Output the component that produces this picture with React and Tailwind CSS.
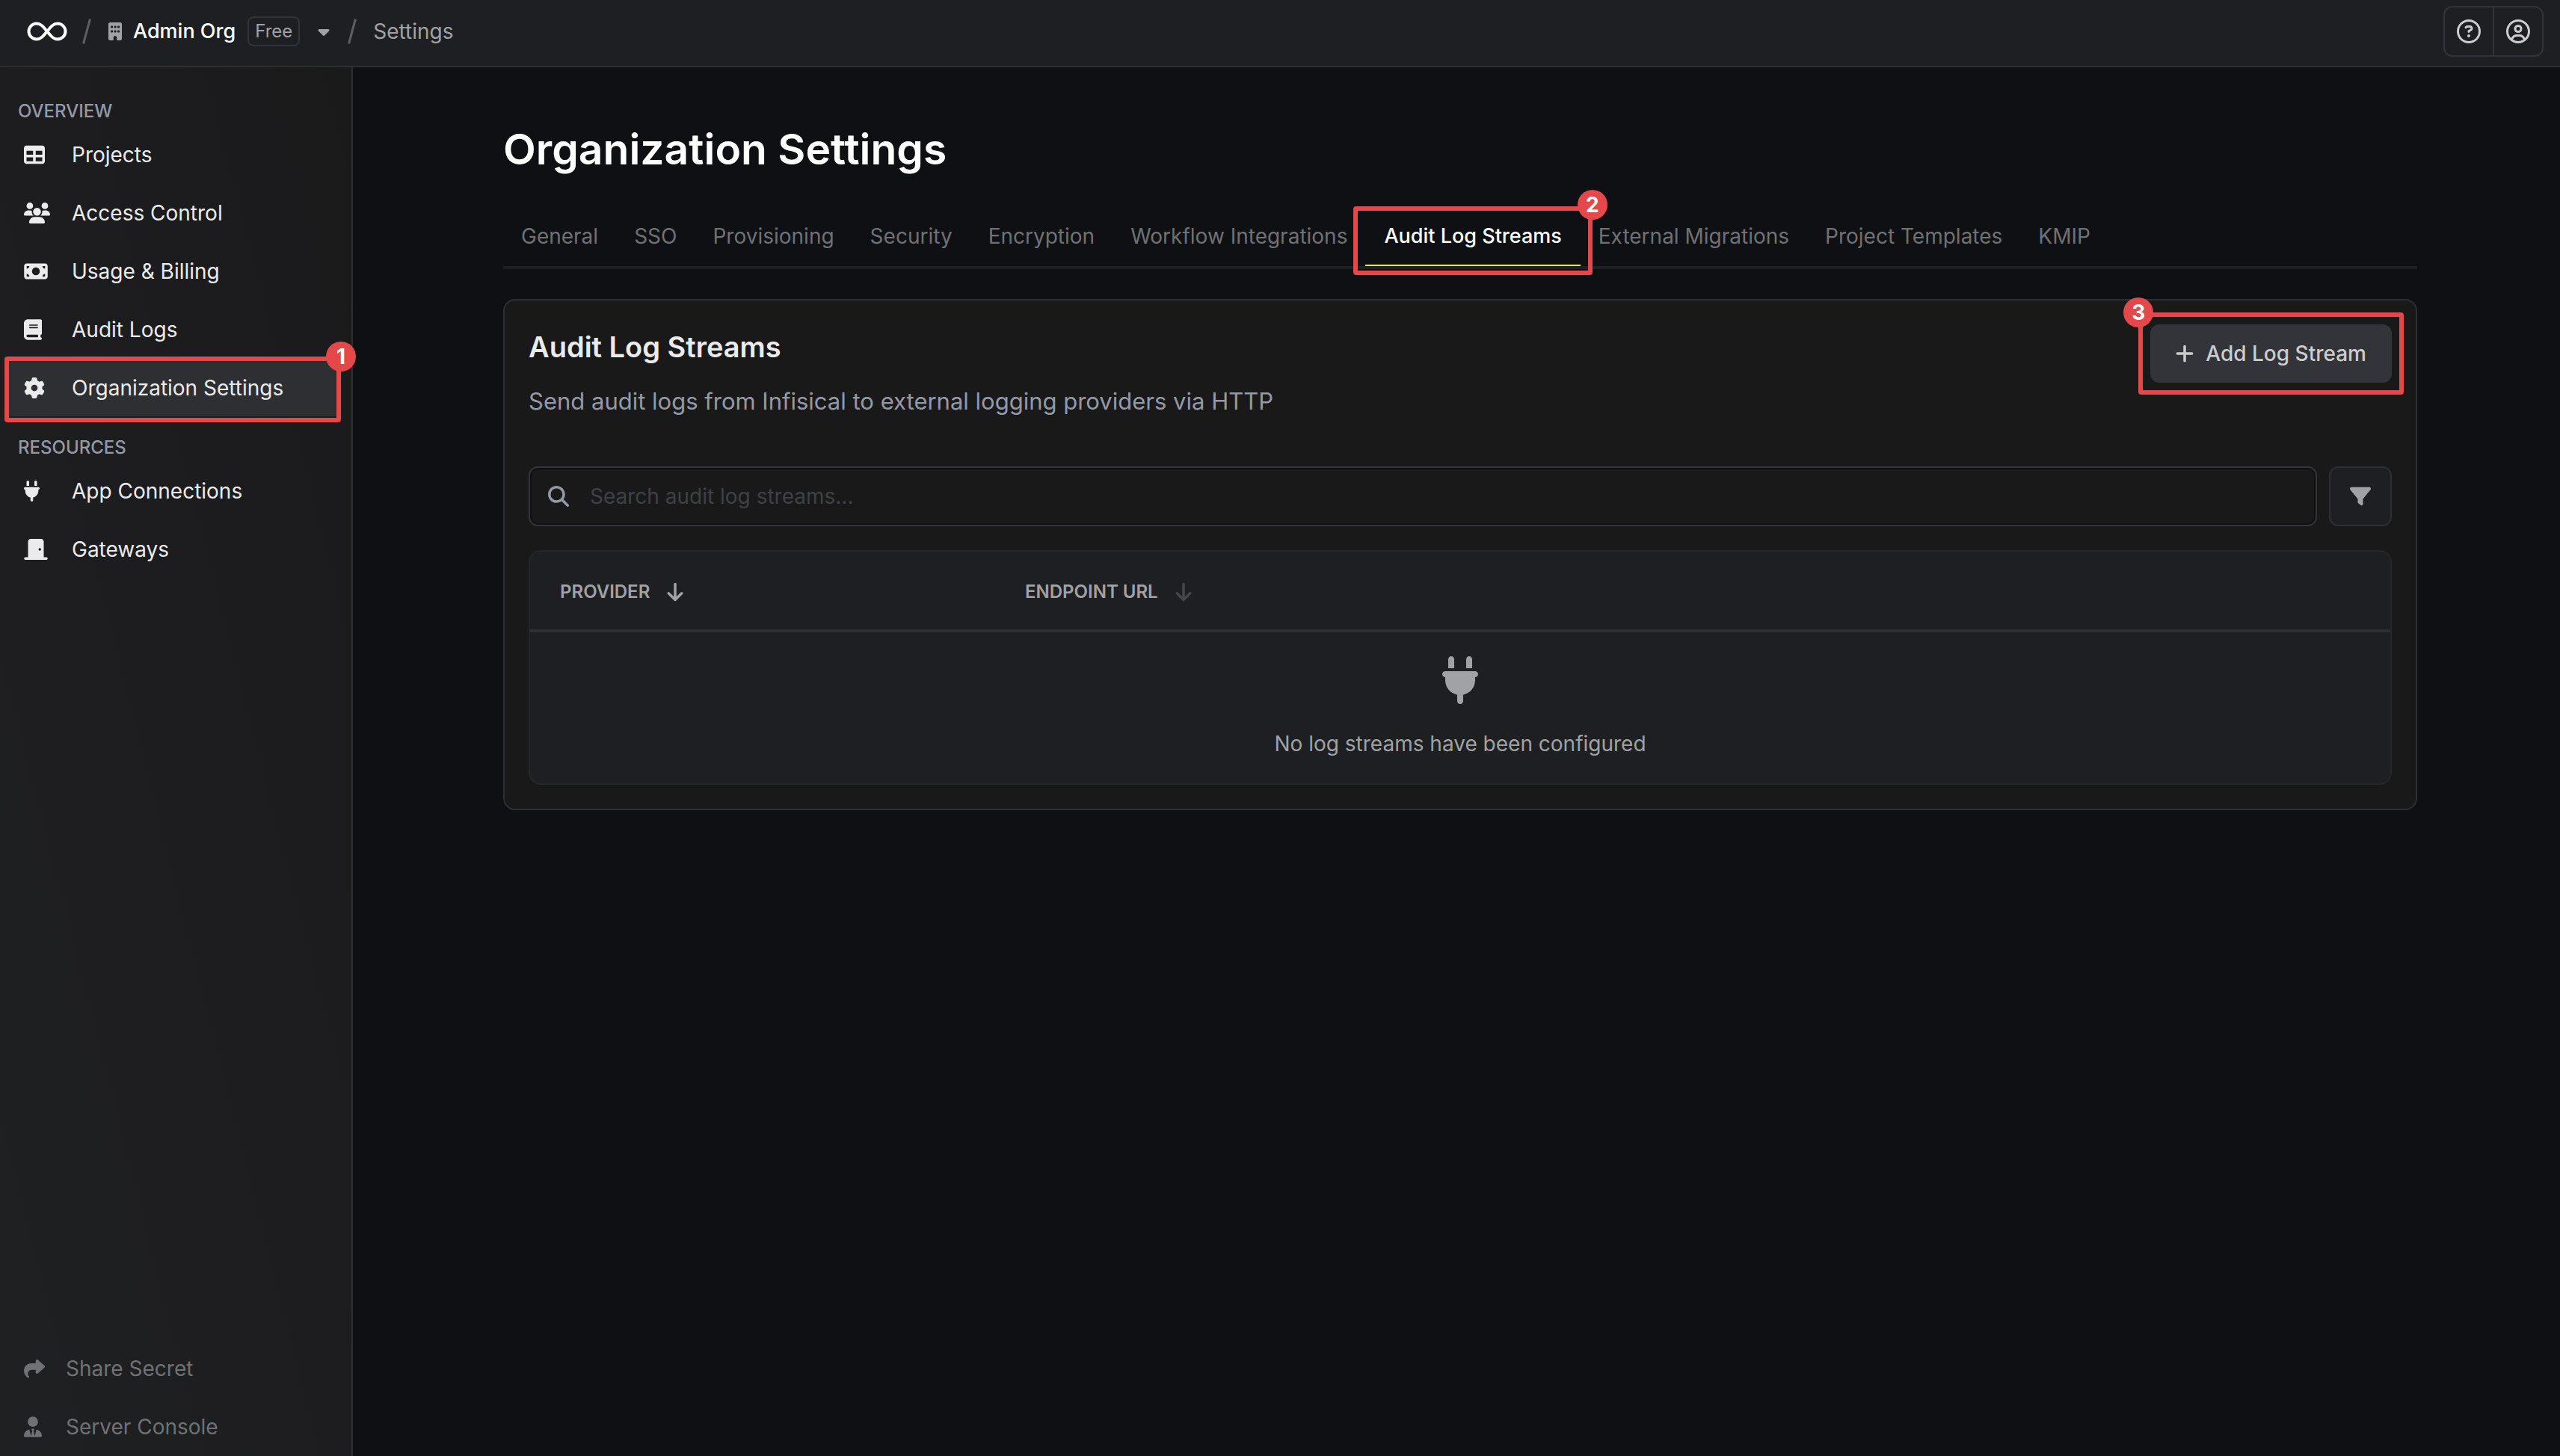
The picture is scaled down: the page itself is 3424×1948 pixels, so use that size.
import {
  FaArrowDown,
  FaBook,
  FaBuilding,
  FaCaretDown,
  FaDoorClosed,
  FaFilter,
  FaGear,
  FaMagnifyingGlass,
  FaMoneyBill,
  FaPlug,
  FaPlus,
  FaRegCircleQuestion,
  FaRegCircleUser,
  FaShare,
  FaTable,
  FaUserTie,
  FaUsers,
} from "react-icons/fa6";

const overview = [
  { label: "Projects", icon: FaTable, iconWidth: "w-7" },
  { label: "Access Control", icon: FaUsers, iconWidth: "w-[35px]" },
  { label: "Usage & Billing", icon: FaMoneyBill, iconWidth: "w-8" },
  { label: "Audit Logs", icon: FaBook, iconWidth: "w-6" },
  { label: "Organization Settings", icon: FaGear, iconWidth: "w-7", active: true },
];

const resources = [
  { label: "App Connections", icon: FaPlug, iconWidth: "w-[21px]" },
  { label: "Gateways", icon: FaDoorClosed, iconWidth: "w-8" },
];

const footer = [
  { label: "Share Secret", icon: FaShare, iconWidth: "w-7" },
  { label: "Server Console", icon: FaUserTie, iconWidth: "w-6" },
];

const tabs = [
  "General",
  "SSO",
  "Provisioning",
  "Security",
  "Encryption",
  "Workflow Integrations",
  "Audit Log Streams",
  "External Migrations",
  "Project Templates",
  "KMIP",
];

function Highlight({ step, className, badge }) {
  return (
    <div className={`pointer-events-none absolute z-10 rounded border-6 border-[#e5484b] ${className}`}>
      <span
        className={`absolute flex size-10 items-center justify-center rounded-full bg-[#e5484b] text-[28px] leading-none font-bold text-white ${badge}`}
      >
        {step}
      </span>
    </div>
  );
}

function Logo() {
  return (
    <svg viewBox="0 0 54 26" className="h-[26px] w-[54px]" fill="none" stroke="white" strokeWidth="4">
      <path d="M27 13C22.5 7.5 19 2.5 13 2.5a10.5 10.5 0 0 0 0 21C19 23.500 22.500 18.500 27 13S35 2.500 41 2.500a10.500 10.500 0 0 1 0 21C35 23.500 31.500 18.500 27 13Z" />
    </svg>
  );
}

function Slash() {
  return (
    <svg viewBox="0 0 12 34" className="h-[34px] w-3" stroke="#5d5e61" strokeWidth="3">
      <path d="M10.500 0.500 1.500 33.500" />
    </svg>
  );
}

function NavItem({ label, icon: Icon, iconWidth, active }) {
  return (
    <li className="relative">
      <a
        href="#"
        className={`flex h-[76px] items-center rounded-md pl-[22px] ${active ? "bg-[#2d2f33]" : ""}`}
      >
        <span className="w-16">
          <Icon className={`h-7 ${iconWidth}`} />
        </span>
        {label}
      </a>
      {active && <Highlight step={1} className="-top-1 -right-0.5 -bottom-2 -left-1" badge="-top-6.5 -right-6.5" />}
    </li>
  );
}

function NavGroup({ title, items }) {
  return (
    <section>
      <h2 className="pl-3.5 text-2xl leading-10 font-medium text-[#9499a7] uppercase">{title}</h2>
      <ul className="flex flex-col gap-0.5">
        {items.map((item) => (
          <NavItem key={item.label} {...item} />
        ))}
      </ul>
    </section>
  );
}

export default function App() {
  return (
    <div className="flex min-h-screen flex-col bg-[#0e1014] font-[Inter,sans-serif] text-[28px] text-[#ebebeb]">
      <header className="flex h-[90px] items-center border-b-2 border-[#2d2f33] bg-[#1e1f22] pr-[22px] pb-1 pl-9">
        <a href="#" aria-label="Home">
          <Logo />
        </a>
        <div className="ml-5 flex items-center">
          <Slash />
          <FaBuilding size={24} className="mr-3 ml-5 text-[#a1a2a3]" />
          <a href="#" className="text-[27px] font-medium text-white">
            Admin Org
          </a>
          <span className="ml-4 rounded-lg border-2 border-[#323439] px-2 text-2xl leading-9 text-[#a1a2a3]">Free</span>
          <button type="button" aria-label="Switch organization" className="ml-5 text-[#a1a2a3]">
            <FaCaretDown size={24} />
          </button>
          <span className="ml-5">
            <Slash />
          </span>
          <span className="ml-[22px] text-[#a1a2a3]">Settings</span>
        </div>
        <div className="ml-auto flex h-[68px] divide-x-2 divide-[#323439] rounded-xl border-2 border-[#323439] text-[#cdcdce]">
          <button type="button" aria-label="Help" className="px-4">
            <FaRegCircleQuestion size={32} />
          </button>
          <button type="button" aria-label="Account" className="px-4">
            <FaRegCircleUser size={32} />
          </button>
        </div>
      </header>

      <div className="flex grow">
        <nav className="flex w-[472px] shrink-0 flex-col border-r-2 border-[#2d2f33] bg-linear-to-tr from-[#1f2022] to-[#1a1a1b] pt-[39px] pr-4 pb-px pl-2.5">
          <NavGroup title="Overview" items={overview} />
          <div className="mt-[22px]">
            <NavGroup title="Resources" items={resources} />
          </div>
          <ul className="mt-auto flex flex-col gap-0.5 text-[#707174]">
            {footer.map(({ label, icon: Icon, iconWidth }) => (
              <li key={label}>
                <a href="#" className="flex h-[76px] items-center pl-[22px]">
                  <span className="w-14">
                    <Icon className={`h-7 ${iconWidth}`} />
                  </span>
                  {label}
                </a>
              </li>
            ))}
          </ul>
        </nav>

        <main className="grow pt-[74px] pl-2.5">
          <div className="mx-auto max-w-[2560px]">
            <h1 className="text-[57px] leading-[72px] font-semibold text-white">Organization Settings</h1>

            <div role="tablist" className="mt-10 flex border-b-4 border-[#1e1f22]">
              {tabs.map((tab) => {
                const active = tab === "Audit Log Streams";
                return (
                  <div key={tab} className="relative">
                    <button
                      type="button"
                      role="tab"
                      aria-selected={active}
                      className={`h-20 border-b-2 pt-0.5 ${
                        active
                          ? "border-[#e0ed34] px-[25px] text-[27px] font-medium text-white"
                          : "border-transparent px-6 text-[#707174]"
                      }`}
                    >
                      {tab}
                    </button>
                    {active && (
                      <Highlight step={2} className="top-0 -right-4 -bottom-3 -left-4" badge="-top-7 -right-6.5" />
                    )}
                  </div>
                );
              })}
            </div>

            <section className="mt-10 rounded-2xl border-2 border-[#2d2f33] bg-[#19191a] p-8">
              <div className="flex items-start justify-between">
                <div>
                  <h2 className="text-[38px] leading-[60px] font-semibold">Audit Log Streams</h2>
                  <p className="mt-4 text-[31px] leading-[54px] text-[#9499a7]">
                    Send audit logs from Infisical to external logging providers via HTTP
                  </p>
                </div>
                <div className="relative">
                  <button
                    type="button"
                    className="flex h-[78px] items-center gap-3.5 rounded-xl bg-[#323439] pr-[34px] pl-8 font-medium text-[#cdcdce]"
                  >
                    <FaPlus size={28} />
                    Add Log Stream
                  </button>
                  <Highlight step={3} className="-top-4 -right-4 -bottom-4 -left-4" badge="-top-6.5 -left-6.5" />
                </div>
              </div>

              <div className="mt-[60px] flex gap-4">
                <label className="flex h-20 grow items-center rounded-xl border-2 border-[#323439] pl-6 inset-ring-2 inset-ring-[#0e1014]">
                  <FaMagnifyingGlass size={28} className="text-[#9499a7]" />
                  <input
                    type="search"
                    aria-label="Search audit log streams"
                    placeholder="Search audit log streams..."
                    className="ml-7 grow bg-transparent outline-none placeholder:text-[#3e4146]"
                  />
                </label>
                <button
                  type="button"
                  aria-label="Filter"
                  className="rounded-xl border-2 border-[#2d2f33] bg-[#1e1f22] px-[26px] text-[#a1a2a3]"
                >
                  <FaFilter size={28} />
                </button>
              </div>

              <div className="mt-8 overflow-hidden rounded-2xl border-2 border-[#26272a] bg-[#1e1f22] text-[#a1a2a3]">
                <table className="w-full">
                  <thead>
                    <tr className="h-[106px] border-b-4 border-[#2d2f33] text-left text-2xl uppercase">
                      <th className="w-1/4 pt-1 pl-10 font-semibold">
                        <button type="button" className="flex items-center gap-5 uppercase">
                          Provider
                          <FaArrowDown size={28} />
                        </button>
                      </th>
                      <th className="pt-1 pl-10 font-semibold">
                        <button type="button" className="flex items-center gap-5 uppercase">
                          Endpoint URL
                          <FaArrowDown size={28} className="opacity-30" />
                        </button>
                      </th>
                    </tr>
                  </thead>
                  <tbody>
                    <tr>
                      <td colSpan={2} className="pt-8 pb-8">
                        <div className="flex flex-col items-center gap-8">
                          <FaPlug size={64} />
                          <span className="leading-[42px]">No log streams have been configured</span>
                        </div>
                      </td>
                    </tr>
                  </tbody>
                </table>
              </div>
            </section>
          </div>
        </main>
      </div>
    </div>
  );
}
